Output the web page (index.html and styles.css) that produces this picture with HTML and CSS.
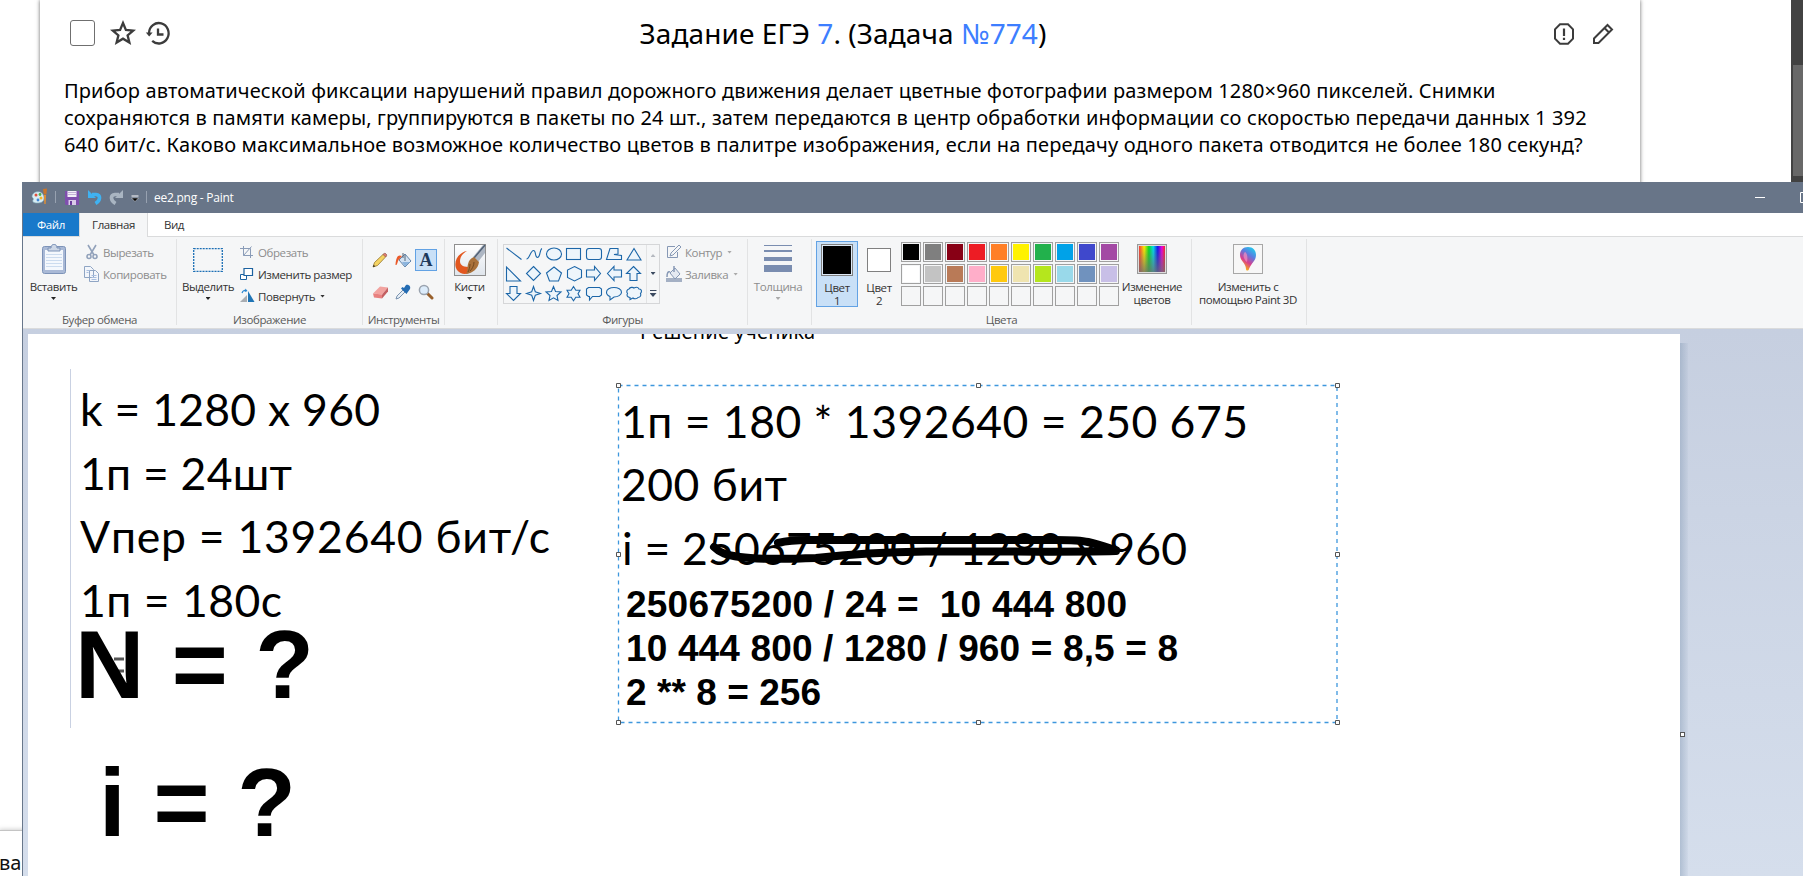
FILE: index.html
```
<!DOCTYPE html>
<html lang="ru">
<head>
<meta charset="utf-8">
<title>ee2.png - Paint</title>
<link rel="stylesheet" href="styles.css">
</head>
<body>
<main class="page">
  <article class="task">
    <header class="task-head">
      <div class="tools-left">
        <span class="check"></span>
        <svg width="26" height="26" viewBox="0 0 26 26" fill="none" stroke="#3c3c3c" stroke-width="2.3"><path d="M13 3l2.9 7 7.3.6-5.6 4.7 1.8 7.3L13 18.7l-6.4 3.9 1.8-7.3-5.6-4.7 7.3-.6z"/></svg>
        <svg width="26" height="26" viewBox="0 0 26 26" fill="none" stroke="#3c3c3c" stroke-width="2.300"><path d="M4 13A9.800 10.200 0 1 1 7.200 20.800"/><path d="M.8 12.500h6.800l-3.400 4z" fill="#3c3c3c" stroke="none"/><path d="M13 8.500v6h5.500"/></svg>
      </div>
      <h1>Задание ЕГЭ <a>7</a>. (Задача <a>№774</a>)</h1>
      <div class="tools-right">
        <svg width="22" height="22" viewBox="0 0 22 22" fill="none" stroke="#3c3c3c" stroke-width="2"><path d="M7 1.300h8l5 5v9.400l-5 5H7l-5-5V6.300z"/><path d="M11 5.500v7.500M11 14.800v2.200" stroke-width="2.200"/></svg>
        <svg width="22" height="22" viewBox="0 0 22 22" fill="none" stroke="#3c3c3c" stroke-width="2"><path d="M2 20v-4.500L15.500 2l4.500 4.500L6.500 20zM12.500 5l4.500 4.500"/></svg>
      </div>
    </header>
    <p>Прибор автоматической фиксации нарушений правил дорожного движения делает цветные фотографии размером 1280×960 пикселей. Снимки<br>сохраняются в памяти камеры, группируются в пакеты по 24 шт., затем передаются в центр обработки информации со скоростью передачи данных 1 392<br>640 бит/с. Каково максимальное возможное количество цветов в палитре изображения, если на передачу одного пакета отводится не более 180 секунд?</p>
  </article>
  <div class="scrollbar"><div class="thumb"></div></div>
  <div class="next-card">ва</div>
</main>

<section class="window">
  <header class="titlebar">
    <svg class="i-app" width="17" height="17" viewBox="0 0 17 17"><path d="M1 9c0-4 4-6 8-5 3 1 4 4 4 6 0 4-3 5-7 5-3 0-5-1-4-3 1-1 0-2-1-3z" fill="#d8ecf4" stroke="#7ba9bd" stroke-width=".6"/><circle cx="5" cy="7" r="1.500" fill="#e0503c"/><circle cx="9" cy="6.500" r="1.400" fill="#4fae4a"/><circle cx="10" cy="10" r="1.500" fill="#f2b632"/><circle cx="7" cy="12" r="1.400" fill="#3f86d6"/><path d="M13 7h2l-.4 9h-1.200z" fill="#e8902d"/><path d="M12 1l4-.5-.6 6h-2.600z" fill="#c9752b"/></svg>
    <i class="bar b1"></i>
    <svg class="i-save" width="14" height="15" viewBox="0 0 14 15"><path d="M0 1h14v14H1l-1-1z" fill="#7f4fae"/><path d="M2.500 1h9v6h-9z" fill="#f3eff8"/><path d="M3 2.500h8M3 4.500h8" stroke="#c4b3d8"/><path d="M3.500 10h7.500v5H3.500z" fill="#d9cbe8"/><path d="M5 11h2v4H5z" fill="#6b3c9c"/></svg>
    <svg class="i-undo" width="14" height="15" viewBox="0 0 14 15"><path d="M4 4.500h4c5 .5 4.500 6-.5 9" fill="none" stroke="#3fb2f2" stroke-width="3.600"/><path d="M0 0v8h8z" fill="#3fb2f2"/></svg>
    <svg class="i-redo" width="14" height="15" viewBox="0 0 14 15"><path d="M10 4.500H6c-5 .5-4.500 6 .5 9" fill="none" stroke="#a9b5c2" stroke-width="3.600"/><path d="M14 0v8H6z" fill="#a9b5c2"/></svg>
    <svg class="i-more" width="8" height="7" viewBox="0 0 8 7"><path d="M.5 1h7" stroke="#fff"/><path d="M.5 3h7L4 6.500z" fill="#000" stroke="#fff" stroke-width=".4"/></svg>
    <i class="bar b2"></i>
    <span class="caption">ee2.png - Paint</span>
    <svg class="i-min" width="10" height="1"><path d="M0 .5h10" stroke="#fff"/></svg>
    <svg class="i-max" width="3" height="11"><path d="M3 .5H.5v10H3" fill="none" stroke="#fff"/></svg>
  </header>
  <nav class="tabs"><span class="file">Файл</span><span class="home">Главная</span><span class="view">Вид</span></nav>

  <div class="ribbon">
    <section class="group g-clip">
      <div class="body">
        <div class="big w70">
          <svg width="24" height="30" viewBox="0 0 24 30"><rect x=".5" y="2.500" width="23" height="27" rx="2" fill="#a9b9d6" stroke="#7d93b8"/><path d="M3 6h18v20H3z" fill="#f4f8fd"/><path d="M4 10.500h16M4 13.500h16M4 16.500h16M4 19.500h16M4 22.500h16" stroke="#ccdcef"/><path d="M6 7V4h3c0-5 6-5 6 0h3v3z" fill="#cdd7e6" stroke="#7d93b8"/></svg>
          <span>Вставить</span><i class="arr"></i>
        </div>
        <div class="rows">
          <div class="row off"><svg width="16" height="16" viewBox="0 0 16 16" fill="none" stroke="#92a2bb" stroke-width="1.600"><path d="M4 1l6 10M12 1L6 11"/><circle cx="5" cy="12.500" r="2"/><circle cx="11" cy="12.500" r="2"/></svg>Вырезать</div>
          <div class="row off"><svg width="16" height="16" viewBox="0 0 16 16" fill="#f3f6fb" stroke="#8fa5c4"><path d="M.5.5h6l3 3v8h-9zM5.500 4.500h6l3 3v8h-9z"/><path d="M7.500 9.500h5M7.500 11.500h5M7.500 13.500h5M2.500 4.500h3M2.500 6.500h2" stroke="#a9bfe0"/></svg>Копировать</div>
        </div>
      </div>
      <div class="label">Буфер обмена</div>
    </section>

    <section class="group g-image">
      <div class="body">
        <div class="big w62">
          <svg width="30" height="30" viewBox="0 0 30 30"><rect x=".7" y="4.700" width="28.600" height="22.600" fill="none" stroke="#1c6fb5" stroke-width="1.300" stroke-dasharray="2 1"/></svg>
          <span>Выделить</span><i class="arr"></i>
        </div>
        <div class="rows">
          <div class="row off"><svg width="16" height="16" viewBox="0 0 16 16" fill="none" stroke="#8a9cb8"><path d="M4.500 2v9.500H14M1 4.500h10.500V14M4.500 11.500l8-9"/></svg>Обрезать</div>
          <div class="row"><svg width="16" height="16" viewBox="0 0 16 16" fill="#fff" stroke="#1c62a0"><path d="M1.500 8.500h6v5h-6z"/><path d="M5 2.500h8.500v7H5z" stroke-width="1.200"/></svg>Изменить размер</div>
          <div class="row"><svg width="16" height="16" viewBox="0 0 16 16"><path d="M1 14h7V7z" fill="#a9adb2"/><path d="M9 3v11h6.500z" fill="#1f74b5"/><path d="M3 5c1-3 3-3 4.500-2" fill="none" stroke="#2a86d0" stroke-width="1.200"/><path d="M6.500.5l2 2.500-3 1z" fill="#2a86d0"/></svg>Повернуть<i class="arr"></i></div>
        </div>
      </div>
      <div class="label">Изображение</div>
    </section>

    <section class="group g-tools">
      <div class="body">
        <div class="tool-grid">
          <span><svg width="16" height="16" viewBox="0 0 16 16"><path d="M1 15l1.500-4.500L11.500 2l2.500 2.500-8.500 9z" fill="#f5d463" stroke="#94752c" stroke-width=".8"/><path d="M11 2.500l2-1.500 2 2-1.500 2z" fill="#dd7b70" stroke="#91524a" stroke-width=".6"/><path d="M1 15l.7-2.200 1.500 1.500z" fill="#222"/></svg></span>
          <span><svg width="17" height="16" viewBox="0 0 17 16"><path d="M4 8l6-6 6 7-6 6z" fill="#d2e2f3" stroke="#6484a8"/><path d="M10 3v6M8 1v5" stroke="#567" fill="none"/><path d="M7 4C3 2 1 5 .500 13c2 1 2-5 4-6z" fill="#ea5a2a"/><path d="M7 10l8 0-5 4.500z" fill="#8cb5de"/></svg></span>
          <span class="on"><b>A</b></span>
          <span><svg width="17" height="16" viewBox="0 0 17 16"><path d="M1 9.500L8 2.500l8 1-6 7z" fill="#f2a3a0"/><path d="M1 9.500l9 1v4l-8-1z" fill="#e8807f"/><path d="M10 10.500l6-7v4l-6 7z" fill="#c45f61"/></svg></span>
          <span><svg width="16" height="16" viewBox="0 0 16 16"><path d="M1 15l1-3 6-6 2 2-6 6z" fill="#e6eef6" stroke="#6d88a8" stroke-width=".9"/><path d="M6 4.500l5.500 5.500 1-1.500L15 5c1-2-1-5-4-4L9 4 7.500 3z" fill="#236cb3"/></svg></span>
          <span><svg width="16" height="16" viewBox="0 0 16 16"><path d="M9 9l5 5" stroke="#98602c" stroke-width="3" stroke-linecap="round"/><circle cx="6" cy="6" r="4.600" fill="#dcecfb" stroke="#9aa3af" stroke-width="1.500"/></svg></span>
        </div>
      </div>
      <div class="label">Инструменты</div>
    </section>

    <section class="group g-brush">
      <div class="body">
        <div class="big w49">
          <svg width="32" height="32" viewBox="0 0 32 32"><defs><linearGradient id="bg" x2="0" y2="1"><stop offset="0" stop-color="#fff"/><stop offset="1" stop-color="#dfe5ec"/></linearGradient></defs><rect x=".5" y=".5" width="31" height="31" fill="url(#bg)" stroke="#8f8f8f"/><path d="M13 7C9 9 6 13 6 17c0 5 4 6 11 6v4c-3 4-10 4-14-1C-2 18 5 8 13 7z" fill="#e2571f"/><path d="M31 2v7l-7 9-5-5L29 1z" fill="#aeb7c4"/><path d="M31 1L20 14" stroke="#526277" stroke-width="1.500"/><path d="M20 13l5 5c-1 7-6 11-13 12 2-3 1-6 2-10 1-4 3-6 6-7z" fill="#a9713a"/><path d="M16 20c0 3-1 6-2 8M20 18c0 4-2 7-4 9" stroke="#74481f" fill="none"/></svg>
          <span>Кисти</span><i class="arr"></i>
        </div>
      </div>
    </section>

    <section class="group g-shapes">
      <div class="body">
        <div class="gallery">
          <svg width="142" height="58" viewBox="504 245 142 58" fill="#edf5fb" stroke="#1c66a8" stroke-width="1.100" stroke-linejoin="miter">
            <path d="M506.500 248l15 11.500" fill="none"/>
            <path d="M526.500 259c3 0 4-8.500 7-8.500s1 7 4 7 2-8 4.500-9" fill="none"/>
            <ellipse cx="554" cy="254" rx="7.500" ry="6"/>
            <rect x="566.500" y="248.500" width="14" height="11"/>
            <rect x="586.500" y="248.500" width="15" height="11" rx="2.500"/>
            <path d="M606.500 259.500l3.500-11h8v5.500l-4 .5 7.500 1v4z"/>
            <path d="M634 248.500l7 11.500h-14z"/>
            <path d="M506.500 267v14h14z"/>
            <path d="M533.500 266.500l7 7-7 7-7-7z"/>
            <path d="M554 267l7.500 6-3 8h-9l-3-8z"/>
            <path d="M574.500 266.500l7 3.500v7.500l-7 3.500-7-3.500V270z"/>
            <path d="M586.500 270h8v-3.500l6 7-6 7V277h-8z"/>
            <path d="M621.500 270h-7.500v-3.500l-6.500 7 6.500 7V277h7.500z"/>
            <path d="M633.500 266.500l7 7h-3.500v7h-7v-7h-3.500z"/>
            <path d="M510 286.500h7v7h3.500l-7 7-7-7h3.500z"/>
            <path d="M533.500 286.500l1.800 5.200 5.200 1.800-5.200 1.800-1.800 5.200-1.800-5.200-5.200-1.800 5.200-1.800z"/>
            <path d="M553.500 286.500l2 5 5.500.5-4 3.500 1 5-4.500-2.700-4.500 2.700 1-5-4-3.500 5.500-.5z"/>
            <path d="M573.500 286.500l2.300 3.700h4.200l-2 3.500 2 3.500h-4.200l-2.300 3.500-2.300-3.500h-4.200l2-3.500-2-3.500h4.200z"/>
            <path d="M588.500 287.500h11l2 1.500v6l-2 1.500h-7l-3 3.500v-3.500h-1l-2-1.500v-6z"/>
            <path d="M614 287.500c4 0 7.500 2 7.500 4.700S618 297 614 297l-4 3v-3.500c-2-.8-3.500-2.500-3.500-4.300 0-2.700 3.500-4.700 7.500-4.700z"/>
            <path d="M629 289c1-2 4-2 5-1 2-1 4-1 5 1 3 0 3 3 1.500 4.500 1 2-.5 4-2.500 4-1 1.500-4 1.500-5 .5l-3 1.500v-2c-3 0-3.500-2.500-2.500-4-1.500-2-.5-4 1.500-4.500z"/>
          </svg>
          <div class="gscroll"><i class="up"></i><i class="arr"></i><i class="arr line"></i></div>
        </div>
        <div class="rows">
          <div class="row off"><svg width="16" height="16" viewBox="0 0 16 16" fill="none" stroke="#8698b5"><path d="M9 2.500H1.500v11h10V8M4 12l1-3 8-8 2 2-8 8z"/></svg>Контур<i class="arr"></i></div>
          <div class="row off"><svg width="16" height="16" viewBox="0 0 16 16"><path d="M0 12h16v4H0z" fill="#a4b0c4"/><path d="M4 7l5-5 5 6-5 5z" fill="#e4e9f1" stroke="#8698b5"/><path d="M8 0v6M4 6C2 5 1 7 1 11" fill="none" stroke="#8698b5" stroke-width="1.500"/></svg>Заливка<i class="arr"></i></div>
        </div>
      </div>
      <div class="label">Фигуры</div>
    </section>

    <section class="group g-size">
      <div class="body">
        <div class="big off w60">
          <svg width="28" height="30" viewBox="0 0 28 30" fill="#7a8db0"><path d="M0 1h28v1H0zM0 6h28v2H0zM0 13h28v4H0zM0 21h28v7H0z"/></svg>
          <span>Толщина</span><i class="arr"></i>
        </div>
      </div>
    </section>

    <section class="group g-colors">
      <div class="body">
        <div class="color c1"><i></i><span>Цвет<br>1</span></div>
        <div class="color c2"><i></i><span>Цвет<br>2</span></div>
        <div class="palette">
          <i class="p01"></i><i class="p02"></i><i class="p03"></i><i class="p04"></i><i class="p05"></i><i class="p06"></i><i class="p07"></i><i class="p08"></i><i class="p09"></i><i class="p10"></i>
          <i class="p11"></i><i class="p12"></i><i class="p13"></i><i class="p14"></i><i class="p15"></i><i class="p16"></i><i class="p17"></i><i class="p18"></i><i class="p19"></i><i class="p20"></i>
          <i></i><i></i><i></i><i></i><i></i><i></i><i></i><i></i><i></i><i></i>
        </div>
        <div class="big w64"><div class="rainbow"></div><span>Изменение<br>цветов</span></div>
      </div>
      <div class="label">Цвета</div>
    </section>

    <section class="group g-3d">
      <div class="body">
        <div class="big w114">
          <svg width="30" height="30" viewBox="0 0 30 30"><defs><linearGradient id="pin" x1=".8" y1="0" x2=".3" y2="1"><stop offset="0" stop-color="#1bd0ec"/><stop offset=".35" stop-color="#5c7be0"/><stop offset=".65" stop-color="#d83e8e"/><stop offset="1" stop-color="#ffc400"/></linearGradient></defs><rect x=".5" y=".5" width="29" height="29" fill="#f7f7f7" stroke="#a7a7a7"/><path d="M15 3c5 0 8 3.500 8 8 0 6-5 8-7 14-.500 2-3 2-3 0 0-6-6-8-6-14 0-4.500 3-8 8-8z" fill="url(#pin)"/><path d="M12 8c2 1 3 5 2 10-3-2-5-7-2-10z" fill="#f58fc0" opacity=".7"/></svg>
          <span>Изменить с<br>помощью Paint 3D</span>
        </div>
      </div>
    </section>
  </div>

  <div class="workspace">
    <div class="sheet">
      <svg class="drawing" width="1652" height="542" viewBox="28 334 1652 542">
        <path d="M70.500 369v359" stroke="#c9d1e2"/>
        <text class="cap" x="640" y="338.500" textLength="175">Решение ученика</text>
        <g class="note">
          <text x="80" y="426" textLength="300">k = 1280 x 960</text>
          <text x="80" y="489.500" textLength="212">1п = 24шт</text>
          <text x="80" y="553" textLength="470">Vпер = 1392640 бит/с</text>
          <text x="80" y="616.500" textLength="202">1п = 180c</text>
          <text x="621" y="438" textLength="627">1п = 180 * 1392640 = 250 675</text>
          <text x="621" y="501" textLength="166">200 бит</text>
          <text x="622" y="564.500" textLength="565">i = 250675200 / 1280 x 960</text>
        </g>
        <path d="M114 659h10M118 671h6" stroke="#555" stroke-width="3"/>
        <g class="huge"><text x="75" y="697.500" textLength="239">N = ?</text><text x="99" y="835.500" textLength="197">i = ?</text></g>
        <g class="calc">
          <text x="626" y="617" textLength="501">250675200 / 24 =&#160; 10 444 800</text>
          <text x="626" y="661" textLength="552">10 444 800 / 1280 / 960 = 8,5 = 8</text>
          <text x="626" y="705" textLength="195">2 ** 8 = 256</text>
        </g>
        <g fill="none" stroke="#000" stroke-width="8" stroke-linecap="round" stroke-linejoin="round">
          <path d="M714 547c6 6 12 8 26 10s50 2 76 1c26-3 70-6 110-6.500s130 1 190-.5"/>
          <path d="M778 543c8-2 18-3 30-3h228c22 0 40-1 52 2s18 5 28 8"/>
          <path d="M1116 550h10" stroke-width="2"/>
        </g>
        <rect x="618.500" y="385.500" width="718.500" height="337" fill="none" stroke="#3e97dd" stroke-width="1.300" stroke-dasharray="4 4"/>
        <g fill="#fff" stroke="#555"><path d="M616.500 383.500h4v4h-4zM976.500 383.500h4v4h-4zM1335.500 383.500h4v4h-4zM616.500 552.500h4v4h-4zM1335.500 552.500h4v4h-4zM616.500 720.500h4v4h-4zM976.500 720.500h4v4h-4zM1335.500 720.500h4v4h-4z"/></g>
      </svg>
    </div>
    <div class="sheet-edge"><i class="handle"></i></div>
  </div>
</section>
</body>
</html>
```
FILE: styles.css
```
* { box-sizing: border-box; }
body { margin: 0; width: 1803px; height: 876px; overflow: hidden; background: #fff; font-family: "Open Sans", "Noto Sans", sans-serif; }
i { font-style: normal; display: block; flex: none; }
svg { display: block; flex: none; }

.page { position: relative; display: flex; justify-content: space-between; height: 876px; padding-left: 40px; font-family: "Noto Sans", sans-serif; color: #000; }
.task { width: 1600px; height: 300px; box-shadow: 0 0 4px rgba(0,0,0,.6); padding: 0 24px; }
.task-head { display: flex; justify-content: space-between; align-items: flex-start; height: 77px; }
.tools-left { display: flex; gap: 9px; padding: 20px 0 0 6px; width: 184px; }
.check { width: 25px; height: 26px; border: 1.500px solid #6f6f6f; border-radius: 3px; margin-right: 6px; }
h1 { margin: 14px 0 0; font-weight: 400; font-size: 28px; line-height: 38px; letter-spacing: 0.08px; white-space: nowrap; }
h1 a { color: #3d7eff; }
.tools-right { display: flex; gap: 17px; justify-content: flex-end; width: 178px; padding: 23px 2px 0 0; }
.task p { margin: 0; font-size: 20px; line-height: 27px; letter-spacing: 0.143px; white-space: nowrap; }
.scrollbar { width: 12px; height: 200px; background: #424242; padding: 65px 0 0 2px; }
.thumb { height: 111px; background: #686868; }
.next-card { position: absolute; left: -1px; top: 830px; width: 60px; height: 60px; border-top: 1px solid #c4c4c4; box-shadow: 0 0 5px rgba(0,0,0,.25); font-size: 20px; line-height: 27px; padding-top: 18px; color: #111; }

.window { position: absolute; left: 22px; top: 182px; width: 1781px; height: 694px; border-left: 1px solid #68778b; background: #fff; color: #333; font-size: 11.500px; letter-spacing: -0.400px; display: flex; flex-direction: column; overflow: hidden; }
.titlebar { height: 31px; flex: none; background: #687588; display: flex; align-items: center; color: #fff; }
.i-app { margin-left: 8px; margin-top: -2px; }
.bar { width: 2px; height: 12px; border: solid #97a1b0; border-width: 0 1px 0 0; margin-top: -2px; }
.b1 { margin-left: 6px; }
.i-save { margin-left: 9px; }
.i-undo { margin-left: 9px; }
.i-redo { margin-left: 7px; }
.i-more { margin-left: 8px; margin-top: 2px; }
.b2 { margin-left: 6px; }
.caption { margin-left: 7px; line-height: 16px; font-size: 12px; letter-spacing: -0.250px; }
.i-min { margin-left: auto; }
.i-max { margin-left: 35px; }
.tabs { height: 24px; flex: none; display: flex; border-bottom: 1px solid #dadbdc; line-height: 24px; }
.tabs span { text-align: center; height: 24px; }
.file { width: 56px; background: #1979ca; color: #fff; height: 23px !important; }
.home { width: 69px; background: #f5f6f7; border: solid #dadbdc; border-width: 0 1px; }
.view { width: 52px; }

.ribbon { height: 92px; flex: none; display: flex; background: #f5f6f7; border-bottom: 1px solid #dadbdc; }
.group { position: relative; flex: none; margin: 2px 0 3px; border-right: 1px solid #e2e3e4; display: flex; flex-direction: column; justify-content: space-between; }
.body { display: flex; height: 68px; }
.label { text-align: center; color: #5a5a5a; line-height: 16px; margin-bottom: -3px; }
.g-clip { width: 154px; } .g-image { width: 186px; } .g-tools { width: 82px; } .g-brush { width: 53px; }
.g-shapes { width: 250px; } .g-size { width: 64px; } .g-colors { width: 380px; } .g-3d { width: 115px; }

.big { display: flex; flex-direction: column; align-items: center; padding-top: 5px; line-height: 13px; text-align: center; white-space: nowrap; }
.big > span { margin-top: 4px; }
.big > svg[height="30"] { margin-bottom: 2px; }
.w70 { width: 61px; } .w62 { width: 62px; } .w49 { width: 49px; } .w60 { width: 60px; } .w64 { width: 64px; margin-left: 1px; } .w114 { width: 112px; }
.arr { width: 5px; height: 3px; background: currentColor; clip-path: polygon(0 0, 100% 0, 50% 100%); }
.big .arr { margin-top: 4px; color: #222; }
.off { color: #8d8d8d; }
.off .arr { color: #aaa !important; }
.rows { display: flex; flex-direction: column; padding-top: 2px; }
.row { height: 22px; display: flex; align-items: center; gap: 3px; white-space: nowrap; }
.row .arr { margin-left: 2px; }

.tool-grid { display: grid; grid-template-columns: 22px 22px 22px; gap: 7px 1px; padding: 10px 0 0 6px; height: 66px; }
.tool-grid span { display: flex; align-items: center; justify-content: center; height: 22px; }
.tool-grid .on { background: #c9e0f7; border: 1px solid #62a2e4; }
.tool-grid b { font: bold 18px "Liberation Serif", serif; color: #1e395b; letter-spacing: 0; }

.gallery { margin: 5px 0 0 5px; width: 157px; height: 60px; border: 1px solid #d5d6d8; display: flex; }
.gscroll { width: 13px; border-left: 1px solid #e2e3e4; display: flex; flex-direction: column; align-items: center; justify-content: space-between; padding: 9px 0 6px; color: #3b4a60; }
.up { width: 5px; height: 3px; background: #b5b9c0; clip-path: polygon(50% 0, 100% 100%, 0 100%); }
.line { width: 7px; height: 7px; clip-path: polygon(0 0, 100% 0, 100% 1px, 0 1px, 0 3px, 100% 3px, 50% 100%, 0 3px); }
.g-shapes .rows { margin-left: 6px; }

.color { display: flex; flex-direction: column; align-items: center; text-align: center; line-height: 13px; color: #333; }
.c1 { margin: 2px 0 0 4px; width: 42px; height: 66px; background: #c9e0f7; border: 1px solid #62a2e4; }
.c1 i { width: 32px; height: 32px; margin-top: 2px; border: 1px solid #808080; background: #000; box-shadow: inset 0 0 0 1px #dce8f5; }
.c1 span { margin-top: 5px; }
.c2 { margin-left: 0; width: 42px; }
.c2 i { width: 24px; height: 24px; margin-top: 9px; border: 1px solid #808080; background: #fff; }
.c2 span { margin-top: 9px; }
.palette { display: grid; grid-template-columns: repeat(10, 20px); grid-auto-rows: 20px; gap: 2px; margin: 3px 0 0 1px; }
.palette i { border: 1px solid #a0a0a0; background-clip: padding-box; box-shadow: inset 0 0 0 1px #f5f6f7; }
.p01 { background: #000; } .p02 { background: #7f7f7f; } .p03 { background: #880015; } .p04 { background: #ed1c24; } .p05 { background: #ff7f27; }
.p06 { background: #fff200; } .p07 { background: #22b14c; } .p08 { background: #00a2e8; } .p09 { background: #3f48cc; } .p10 { background: #a349a4; }
.p11 { background: #fff; } .p12 { background: #c3c3c3; } .p13 { background: #b97a57; } .p14 { background: #ffaec9; } .p15 { background: #ffc90e; }
.p16 { background: #efe4b0; } .p17 { background: #b5e61d; } .p18 { background: #99d9ea; } .p19 { background: #7092be; } .p20 { background: #c8bfe7; }
.rainbow { width: 30px; height: 30px; margin-bottom: 2px; border: 2px solid #ddd; outline: 1px solid #999; outline-offset: -1px; background: linear-gradient(transparent, rgba(110,110,110,.8)), linear-gradient(90deg, #f33, #fe0 20%, #0d2 38%, #0de 55%, #11e 72%, #e0d 88%, #f22); }

.workspace { flex: 1; display: flex; padding: 5px 0 0 5px; background: linear-gradient(#c6cfe0, #d5deec); }
.sheet { width: 1652px; background: #fff; overflow: hidden; }
.sheet-edge { width: 8px; margin-top: 9px; background: linear-gradient(90deg, rgba(140,160,185,.5), rgba(140,160,185,.08)); padding-top: 389px; }
.handle { width: 5px; height: 5px; border: 1px solid #555; background: #fff; }
.drawing { letter-spacing: 0; }
.drawing text { fill: #000; }
.cap { font: 20px "Noto Sans", sans-serif; }
.note { font: 44.500px Lato, "Open Sans", sans-serif; }
.huge { font: bold 96px "Liberation Sans", Arial, sans-serif; }
.calc { font: bold 37px "Liberation Sans", Arial, sans-serif; }
```
